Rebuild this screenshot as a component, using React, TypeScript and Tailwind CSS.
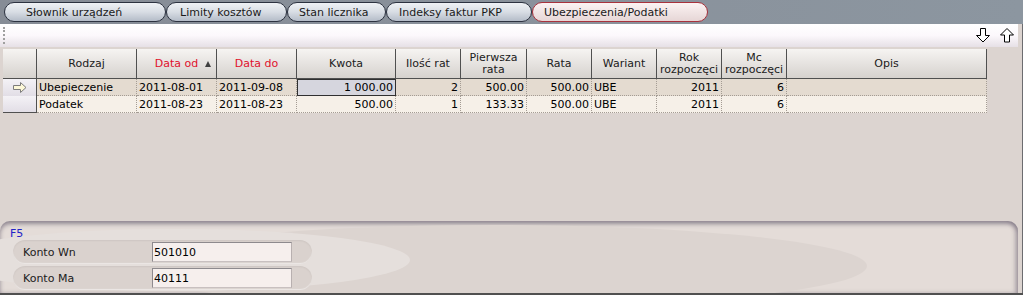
import React from 'react';

const TABS = [
  { label: 'Słownik urządzeń', cls: 'w-[162px] pl-[21px]' },
  { label: 'Limity kosztów', cls: 'w-[121px] pl-[13px]' },
  { label: 'Stan licznika', cls: 'w-[99px] pl-[11px]' },
  { label: 'Indeksy faktur PKP', cls: 'w-[146px] pl-[12px]' },
  { label: 'Ubezpieczenia/Podatki', cls: 'w-[176px] pl-[11px]', active: true },
];

type Col = {
  label: string[];
  w: string;
  right?: boolean;
  red?: boolean;
  sort?: boolean;
};

const COLS: Col[] = [
  { label: ['Rodzaj'], w: 'w-[100px]' },
  { label: ['Data od'], w: 'w-[80px]', red: true, sort: true },
  { label: ['Data do'], w: 'w-[80px]', red: true },
  { label: ['Kwota'], w: 'w-[99px]', right: true },
  { label: ['Ilość rat'], w: 'w-[65px]', right: true },
  { label: ['Pierwsza', 'rata'], w: 'w-[66px]', right: true },
  { label: ['Rata'], w: 'w-[65px]', right: true },
  { label: ['Wariant'], w: 'w-[65px]' },
  { label: ['Rok', 'rozpoczęci'], w: 'w-[65px]', right: true },
  { label: ['Mc', 'rozpoczęci'], w: 'w-[65px]', right: true },
  { label: ['Opis'], w: 'w-[200px]' },
];

const ROWS = [
  ['Ubepieczenie', '2011-08-01', '2011-09-08', '1 000.00', '2', '500.00', '500.00', 'UBE', '2011', '6', ''],
  ['Podatek', '2011-08-23', '2011-08-23', '500.00', '1', '133.33', '500.00', 'UBE', '2011', '6', ''],
];

function ArrowDown() {
  return (
    <svg width="14" height="15" viewBox="0 0 14 15">
      <path d="M4.5 0.5 H9.5 V7.5 H13.5 L7 14 L0.5 7.5 H4.5 Z" fill="#fff" stroke="#000" strokeWidth="1" />
    </svg>
  );
}

function ArrowUp() {
  return (
    <svg width="14" height="15" viewBox="0 0 14 15">
      <path d="M7 0.5 L13.5 7 H9.5 V14 H4.5 V7 H0.5 Z" fill="#fff" stroke="#000" strokeWidth="1" />
    </svg>
  );
}

function RowPointer() {
  return (
    <svg width="14" height="11" viewBox="0 0 14 11">
      <path d="M0.5 3.5 H7.5 V0.5 L13 5.5 L7.5 10.5 V7.5 H0.5 Z" fill="#fdf8d8" stroke="#7c7c7c" strokeWidth="1" />
    </svg>
  );
}

function Field({ label, value }: { label: string; value: string }) {
  return (
    <div className="flex h-[24px] w-[299px] items-center rounded-full bg-[#dad2ce] shadow-[inset_0_1px_2px_rgba(0,0,0,0.06),inset_0_-1px_1px_rgba(255,255,255,0.5)]">
      <span className="w-[139px] pl-[10px] text-[#202020]">{label}</span>
      <div className="flex h-[20px] w-[140px] items-center border border-[#8e8a8e] border-b-[#c8c0c0] border-r-[#b8b0b0] bg-[#f6efed] pl-[1px] text-black">
        {value}
      </div>
    </div>
  );
}

export default function App() {
  return (
    <div className="relative flex h-[295px] w-[1023px] flex-col overflow-hidden bg-[#dcd4d0] font-['DejaVu_Sans',sans-serif] text-[11px] leading-[13px]">
      {/* tab strip */}
      <div className="flex h-[24px] shrink-0 items-start bg-gradient-to-r from-[#868c96] to-[#8c96a0] pl-[4px] pt-[2px]">
        {TABS.map((t) => (
          <div
            key={t.label}
            className={
              t.active
                ? `${t.cls} flex h-[20px] shrink-0 items-center justify-start rounded-full border border-[#a8323c] bg-gradient-to-b from-[#fbf3f3] to-[#e6d6d6] text-[11px] text-[#1a1a1a]`
                : `${t.cls} flex h-[20px] shrink-0 items-center justify-start rounded-full border border-[#2c3240] bg-gradient-to-b from-[#eef1f5] via-[#d8dde4] to-[#b4bcc8] text-[11px] text-[#1a1a1a]`
            }
          >
            <span className="whitespace-nowrap">{t.label}</span>
          </div>
        ))}
      </div>

      <div className="flex flex-1 flex-col border-r border-[#6c6c70] pr-[4px]">
        {/* toolbar */}
        <div className="flex h-[23px] shrink-0 items-center bg-gradient-to-b from-[#ffffff] via-[#fcf8fc] to-[#e6e0e6]">
          <div className="ml-[3px] h-[17px] border-l-2 border-dotted border-[#a0a0a0]" />
          <div className="ml-auto mr-[4px] flex items-center gap-[10px]">
            <ArrowDown />
            <ArrowUp />
          </div>
        </div>

        {/* grid */}
        <div className="h-[174px] shrink-0 pl-[3px] pt-[2px]">
          <div className="flex h-[30px]">
            <div className="w-[34px] border-b border-r border-[#505050] bg-gradient-to-b from-[#f6f4f2] to-[#d6d2ce]" />
            {COLS.map((c, i) => (
              <div
                key={i}
                className={`${c.w} relative flex flex-col items-center justify-center border-b border-r border-[#505050] bg-gradient-to-b from-[#f6f4f2] to-[#d6d2ce] leading-[12px] ${c.red ? 'text-[#e0102c]' : 'text-[#202020]'}`}
              >
                {c.label.map((l) => (
                  <span key={l}>{l}</span>
                ))}
                {c.sort && (
                  <svg className="absolute right-[5px] top-[12px]" width="6" height="6" viewBox="0 0 6 6">
                    <path d="M3 0 L6 6 H0 Z" fill="#404040" />
                  </svg>
                )}
              </div>
            ))}
          </div>
          {ROWS.map((r, ri) => (
            <div key={ri} className="flex h-[17px]">
              <div
                className={`flex w-[34px] items-center justify-center border-r border-[#505050] bg-gradient-to-b from-[#f4f2f6] to-[#e2dee6] ${ri === ROWS.length - 1 ? 'border-b' : ''}`}
              >
                {ri === 0 && <RowPointer />}
              </div>
              {COLS.map((c, ci) => {
                const focused = ri === 0 && ci === 3;
                return (
                  <div
                    key={ci}
                    className={`${c.w} flex items-center overflow-hidden whitespace-nowrap px-[2px] text-black ${c.right ? 'justify-end' : 'justify-start'} ${
                      focused
                        ? 'border border-[#303030] bg-[#d6d6de]'
                        : `border-b border-r border-dotted border-[#a49c94] ${ri === 0 ? 'bg-[#e4dbd0]' : 'bg-[#f6f0e8]'}`
                    }`}
                  >
                    {r[ci]}
                  </div>
                );
              })}
            </div>
          ))}
        </div>

        {/* bottom panel */}
        <div className="relative flex-1 overflow-hidden rounded-t-[10px] bg-[#e4dcd8] pl-[10px] pt-[7px] shadow-[inset_0_3px_4px_rgba(90,80,100,0.55),inset_-3px_0_4px_rgba(90,80,100,0.3)]">
          <div className="pointer-events-none absolute left-[120px] top-[4px] h-[82px] w-[747px] rounded-[50%] bg-[#dcd4d0]" />
          <div className="pointer-events-none absolute left-[-60px] top-[8px] h-[62px] w-[470px] rounded-[50%] bg-[#e5dfdc]" />
          <div className="relative flex flex-col">
            <span className="h-[11px] leading-[11px] text-[#2424c8]">F5</span>
            <div className="ml-[3px] mt-[1px] flex flex-col gap-[2px]">
              <Field label="Konto Wn" value="501010" />
              <Field label="Konto Ma" value="40111" />
            </div>
          </div>
        </div>
      </div>
      <div className="h-[2px] shrink-0 bg-[#505050]" />
    </div>
  );
}
